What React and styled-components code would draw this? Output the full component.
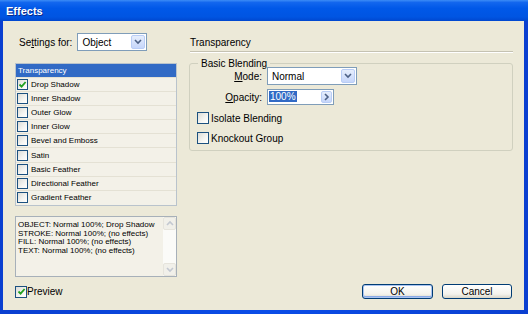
import styled, { createGlobalStyle } from "styled-components";

const Global = createGlobalStyle`
  body {
    margin: 0;
    background: #fff;
    font-family: "Liberation Sans", Arial, sans-serif;
  }
`;

const Frame = styled.div`
  width: 528px;
  height: 314px;
  box-sizing: border-box;
  display: flex;
  flex-direction: column;
  background: linear-gradient(90deg, #0a3fd0 0%, #0a4de8 50%, #0a3fd0 100%);
`;

const TitleBar = styled.div`
  height: 21px;
  flex: none;
  display: flex;
  align-items: center;
  padding-left: 6px;
  background: linear-gradient(
    180deg,
    #3c8cf6 0%,
    #1266ee 12%,
    #0058e8 40%,
    #0055e2 80%,
    #0047cf 100%
  );
  color: #fff;
  font-weight: bold;
  font-size: 11px;
  text-shadow: 1px 1px 0 #0a2a8a;
`;

const Body = styled.div`
  flex: 1;
  margin: 0 4px 4px 3px;
  background: #ece9d8;
  display: flex;
  flex-direction: column;
  padding: 12px 11px 0 12px;
  font-size: 10px;
  color: #000;
`;

const Columns = styled.div`
  display: flex;
  gap: 13px;
`;

const LeftCol = styled.div`
  width: 162px;
  display: flex;
  flex-direction: column;
`;

const RightCol = styled.div`
  flex: 1;
  display: flex;
  flex-direction: column;
`;

const SettingsRow = styled.div`
  height: 18px;
  display: flex;
  align-items: center;
  padding-left: 4px;
  gap: 5px;
`;

const Select = styled.div`
  width: ${(p) => p.$w}px;
  height: ${(p) => p.$h}px;
  box-sizing: border-box;
  border: 1px solid #7f9db9;
  background: #fff;
  display: flex;
  align-items: center;
  padding: 1px;
  gap: 2px;
`;

const SelectValue = styled.span`
  flex: 1;
  padding-left: ${(p) => (p.$flush ? 0 : 3)}px;
  white-space: nowrap;
`;

const SelectedText = styled.span`
  background: #316ac5;
  color: #fff;
  padding: 0 1px;
  line-height: 12px;
`;

const DropBtn = styled.div`
  width: ${(p) => p.$w || 14}px;
  align-self: stretch;
  box-sizing: border-box;
  border: 1px solid #b9cdf6;
  border-radius: 2px;
  background: linear-gradient(180deg, #e6eefc 0%, #c6d6fa 100%);
  display: flex;
  align-items: center;
  justify-content: center;
`;

const List = styled.div`
  margin-top: 12px;
  height: 143px;
  box-sizing: border-box;
  border: 1px solid #b9c3cc;
  background: #f3f1e8;
  display: flex;
  flex-direction: column;
`;

const ListHeader = styled.div`
  height: 13px;
  background: #316ac5;
  color: #fff;
  font-size: 8px;
  display: flex;
  align-items: center;
  padding-left: 2px;
  border-bottom: 1px solid #e4e1d4;
`;

const ListRow = styled.div`
  height: 14.3px;
  box-sizing: border-box;
  border-bottom: 1px solid #e4e1d4;
  display: flex;
  align-items: center;
  padding-left: 1px;
  gap: 3px;
  font-size: 8px;
  &:last-child {
    border-bottom: none;
  }
`;

const Box = styled.span`
  width: ${(p) => p.$size}px;
  height: ${(p) => p.$size}px;
  box-sizing: border-box;
  flex: none;
  border: 1px solid #1c5180;
  background: linear-gradient(135deg, #dcdcd7 0%, #f5f5f2 60%, #ffffff 100%);
  display: flex;
  align-items: center;
  justify-content: center;
`;

const Summary = styled.div`
  margin-top: 10px;
  height: 61px;
  box-sizing: border-box;
  border: 1px solid #a7b0b9;
  background: #f3f1e8;
  display: flex;
`;

const SummaryText = styled.div`
  flex: 1;
  padding: 4px 2px;
  font-size: 8px;
  line-height: 8.6px;
  white-space: nowrap;
`;

const ScrollBar = styled.div`
  width: 13px;
  background: #fbfbf8;
  display: flex;
  flex-direction: column;
  justify-content: space-between;
`;

const ScrollBtn = styled.div`
  height: 13px;
  box-sizing: border-box;
  border: 1px solid #e6e4dc;
  border-radius: 2px;
  background: #f1f0ea;
  display: flex;
  align-items: center;
  justify-content: center;
`;

const Heading = styled.div`
  height: 18px;
  display: flex;
  align-items: center;
  border-bottom: 1px solid #c5c2b2;
  box-shadow: 0 1px 0 #fff;
`;

const Group = styled.fieldset`
  margin: 6px 0 0 -1px;
  padding: 0 0 0 7px;
  height: 93px;
  box-sizing: border-box;
  border: 1px solid #d0d0bf;
  border-radius: 3px;
  display: flex;
  flex-direction: column;
`;

const Legend = styled.legend`
  margin-left: 1px;
  padding: 0 3px;
  font-size: 10px;
  line-height: 11px;
`;

const FormRow = styled.div`
  display: grid;
  grid-template-columns: 65px auto;
  column-gap: 5px;
  align-items: center;
  margin-top: ${(p) => p.$mt}px;
`;

const FieldLabel = styled.span`
  text-align: right;
`;

const CheckRow = styled.div`
  display: flex;
  align-items: center;
  gap: 2px;
  margin-top: ${(p) => p.$mt}px;
`;

const Footer = styled.div`
  margin-top: 7px;
  height: 15px;
  display: flex;
  align-items: center;
  padding-right: 1px;
`;

const Spacer = styled.div`
  flex: 1;
`;

const Button = styled.div`
  width: ${(p) => p.$w}px;
  height: 15px;
  box-sizing: border-box;
  border: 1px solid #003c74;
  border-radius: 3px;
  background: linear-gradient(180deg, #ffffff 0%, #f3f2ec 70%, #d8d5c8 100%);
  box-shadow: ${(p) =>
    p.$default ? "inset 0 0 0 1px #a9c3f0, inset 0 -1px 0 1px #89a9e6" : "none"};
  display: flex;
  align-items: center;
  justify-content: center;
  margin-left: ${(p) => p.$ml || 0}px;
`;

const U = styled.span`
  text-decoration: underline;
`;

const Chevron = ({ dir = "down", color = "#4d6185" }) => {
  const d = {
    down: "M1 2 L4 5 L7 2",
    up: "M1 5 L4 2 L7 5",
    right: "M2 1 L5 4 L2 7",
  }[dir];
  return (
    <svg width="8" height="8" viewBox="0 0 8 8">
      <path d={d} fill="none" stroke={color} strokeWidth="1.6" />
    </svg>
  );
};

const Check = () => (
  <svg width="9" height="9" viewBox="0 0 9 9">
    <path d="M1.5 4.5 L3.6 6.6 L7.6 2" fill="none" stroke="#21a121" strokeWidth="1.8" />
  </svg>
);

const effects = [
  { name: "Drop Shadow", on: true },
  { name: "Inner Shadow" },
  { name: "Outer Glow" },
  { name: "Inner Glow" },
  { name: "Bevel and Emboss" },
  { name: "Satin" },
  { name: "Basic Feather" },
  { name: "Directional Feather" },
  { name: "Gradient Feather" },
];

const summary = [
  "OBJECT: Normal 100%; Drop Shadow",
  "STROKE: Normal 100%; (no effects)",
  "FILL: Normal 100%; (no effects)",
  "TEXT: Normal 100%; (no effects)",
];

export default function App() {
  return (
    <>
      <Global />
      <Frame>
        <TitleBar>Effects</TitleBar>
        <Body>
          <Columns>
            <LeftCol>
              <SettingsRow>
                <span>
                  Se<U>t</U>tings for:
                </span>
                <Select $w={70} $h={18}>
                  <SelectValue>Object</SelectValue>
                  <DropBtn>
                    <Chevron />
                  </DropBtn>
                </Select>
              </SettingsRow>
              <List>
                <ListHeader>Transparency</ListHeader>
                {effects.map((e) => (
                  <ListRow key={e.name}>
                    <Box $size={11}>{e.on && <Check />}</Box>
                    {e.name}
                  </ListRow>
                ))}
              </List>
              <Summary>
                <SummaryText>
                  {summary.map((s) => (
                    <div key={s}>{s}</div>
                  ))}
                </SummaryText>
                <ScrollBar>
                  <ScrollBtn>
                    <Chevron dir="up" color="#c3c8d1" />
                  </ScrollBtn>
                  <ScrollBtn>
                    <Chevron color="#c3c8d1" />
                  </ScrollBtn>
                </ScrollBar>
              </Summary>
            </LeftCol>
            <RightCol>
              <Heading>Transparency</Heading>
              <Group>
                <Legend>Basic Blending</Legend>
                <FormRow $mt={-2}>
                  <FieldLabel>
                    <U>M</U>ode:
                  </FieldLabel>
                  <Select $w={90} $h={18}>
                    <SelectValue>Normal</SelectValue>
                    <DropBtn>
                      <Chevron />
                    </DropBtn>
                  </Select>
                </FormRow>
                <FormRow $mt={4}>
                  <FieldLabel>
                    <U>O</U>pacity:
                  </FieldLabel>
                  <Select $w={67} $h={16}>
                    <SelectValue $flush>
                      <SelectedText>100%</SelectedText>
                    </SelectValue>
                    <DropBtn $w={11}>
                      <Chevron dir="right" />
                    </DropBtn>
                  </Select>
                </FormRow>
                <CheckRow $mt={7}>
                  <Box $size={12} />
                  <span>Isolate Blending</span>
                </CheckRow>
                <CheckRow $mt={8}>
                  <Box $size={12} />
                  <span>Knockout Group</span>
                </CheckRow>
              </Group>
            </RightCol>
          </Columns>
          <Footer>
            <Box $size={12}>
              <Check />
            </Box>
            <span>Preview</span>
            <Spacer />
            <Button $w={71} $default>
              OK
            </Button>
            <Button $w={70} $ml={9}>
              Cancel
            </Button>
          </Footer>
        </Body>
      </Frame>
    </>
  );
}
